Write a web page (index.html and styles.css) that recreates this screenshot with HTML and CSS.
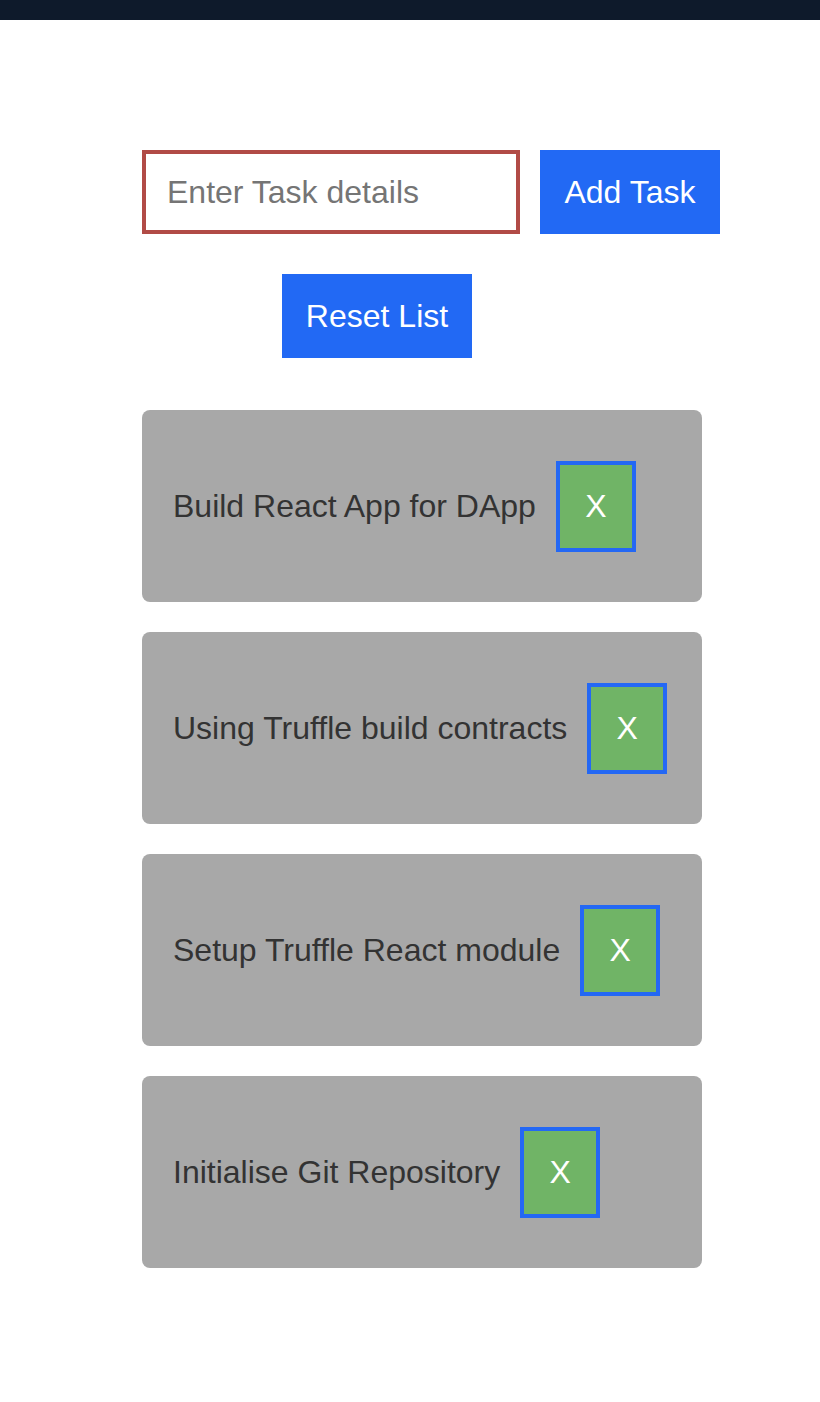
FILE: index.html
```html
<!DOCTYPE html>
<html>
<head>
<meta charset="utf-8">
<link rel="stylesheet" href="styles.css">
</head>
<body>
<div class="topbar"></div>
<main class="app">
  <div class="add-row">
    <input class="task-input" type="text" placeholder="Enter Task details">
    <button class="btn btn-blue add-btn">Add Task</button>
  </div>
  <div class="reset-row">
    <button class="btn btn-blue reset-btn">Reset List</button>
  </div>
  <ul class="task-list">
    <li class="task-card"><span class="task-text">Build React App for DApp</span><button class="del-btn">X</button></li>
    <li class="task-card"><span class="task-text">Using Truffle build contracts</span><button class="del-btn">X</button></li>
    <li class="task-card"><span class="task-text">Setup Truffle React module</span><button class="del-btn">X</button></li>
    <li class="task-card"><span class="task-text">Initialise Git Repository</span><button class="del-btn">X</button></li>
  </ul>
</main>
</body>
</html>
```
FILE: styles.css
```css
* { box-sizing: border-box; }
html, body { margin: 0; padding: 0; background: #ffffff; }
body { font-family: "Liberation Sans", Arial, sans-serif; }
.topbar { height: 20px; background: #0e1a2b; }
.app { padding: 130px 0 0 142px; }
.add-row { display: flex; gap: 20px; }
.task-input {
  width: 378px; height: 84px;
  border: 4px solid #b14b46;
  padding: 0 20px 0 21px;
  font-family: inherit; font-size: 32px; color: #333;
  outline: none; background: #fff;
}
.task-input::placeholder { color: #757575; }
.btn {
  height: 84px; border: none; padding: 0;
  font-family: inherit; font-size: 32px; color: #ffffff;
  cursor: pointer;
}
.btn-blue { background: #2269f4; }
.add-btn { width: 180px; }
.reset-row { margin-top: 40px; padding-left: 140px; }
.reset-btn { width: 190px; }
.task-list {
  list-style: none; margin: 52px 0 0 0; padding: 0;
  display: flex; flex-direction: column; gap: 30px;
  width: 560px;
}
.task-card {
  height: 192px; background: #a8a8a8; border-radius: 8px;
  display: flex; align-items: center; gap: 20px;
  padding: 0 0 0 31px;
}
.task-text { font-size: 32px; color: #333333; }
.del-btn {
  width: 80px; height: 91px;
  border: 4px solid #2468f4; background: #70b466;
  color: #ffffff; font-family: inherit; font-size: 32px;
  padding: 0; cursor: pointer;
}
```
